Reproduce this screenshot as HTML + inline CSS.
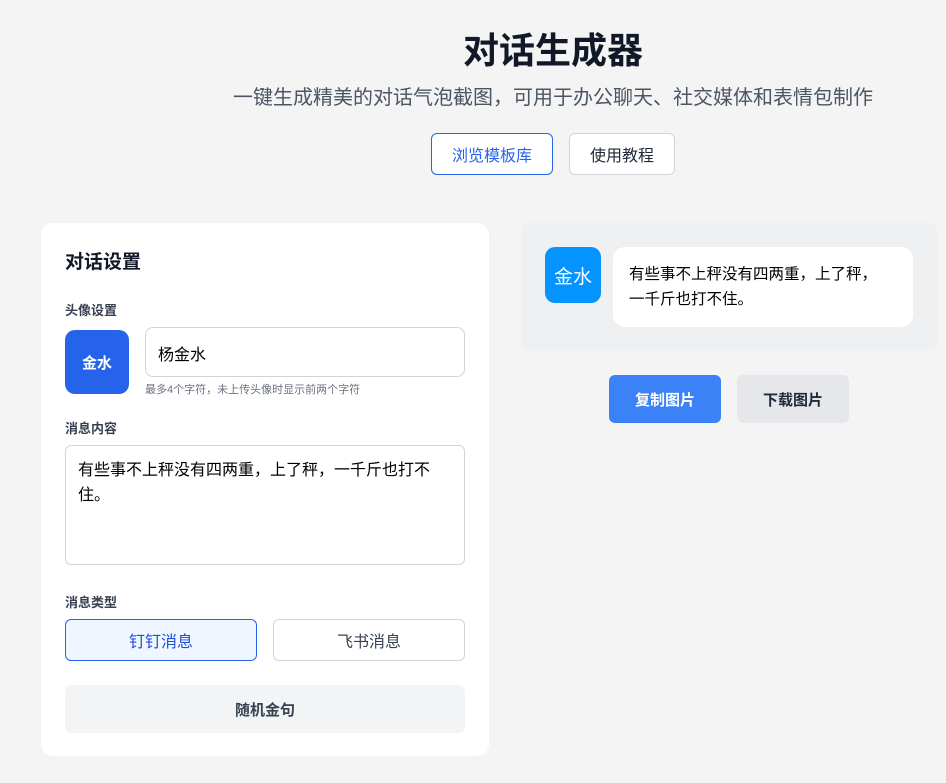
<!DOCTYPE html>
<html><head><meta charset="utf-8"><style>
*{box-sizing:border-box;margin:0;padding:0}
body{width:946px;height:783px;background:#f4f4f5;font-family:"Liberation Sans","Noto Sans CJK SC",sans-serif;position:relative;overflow:hidden;color:#1f2937}
.abs{position:absolute}
h1{position:absolute;left:0;width:1106px;top:22px;text-align:center;font-size:36px;font-weight:700;color:#111827}
.sub{left:0;width:1106px;top:81px;text-align:center;font-size:20px;color:#4b5563}
.btn{position:absolute;height:42px;border-radius:6px;border:1px solid #d1d5db;background:#fff;display:flex;align-items:center;justify-content:center;font-size:16px}
.card{left:41px;top:223px;width:448px;height:533px;background:#fff;border-radius:12px}
.lbl{font-size:13px;color:#374151;font-weight:700}
</style></head><body>
<h1>对话生成器</h1>
<div class="abs sub">一键生成精美的对话气泡截图，可用于办公聊天、社交媒体和表情包制作</div>
<div class="btn" style="left:431px;top:133px;width:122px;border-color:#2563eb;color:#2563eb">浏览模板库</div>
<div class="btn" style="left:569px;top:133px;width:106px;color:#1f2937">使用教程</div>

<div class="abs card">
<div class="abs" style="left:24px;top:24px;font-size:19px;font-weight:700;color:#111827">对话设置</div>
<div class="abs lbl" style="left:24px;top:77px">头像设置</div>
<div class="abs" style="left:24px;top:107px;width:64px;height:64px;border-radius:10px;background:#2563eb;color:#fff;display:flex;align-items:center;justify-content:center;font-size:15px;font-weight:700">金水</div>
<div class="abs" style="left:104px;top:104px;width:320px;height:50px;border:1px solid #d1d5db;border-radius:8px;font-size:16px;padding:13px 12px;color:#000">杨金水</div>
<div class="abs" style="left:104px;top:158px;font-size:11px;color:#6b7280">最多4个字符，未上传头像时显示前两个字符</div>
<div class="abs lbl" style="left:24px;top:195px">消息内容</div>
<div class="abs" style="left:24px;top:222px;width:400px;height:120px;border:1px solid #d1d5db;border-radius:6px;font-size:16px;line-height:25px;padding:12px 12px;color:#000">有些事不上秤没有四两重，上了秤，一千斤也打不住。</div>
<div class="abs lbl" style="left:24px;top:369px">消息类型</div>
<div class="btn" style="left:24px;top:396px;width:192px;background:#eff6ff;border-color:#2563eb;color:#1d4ed8">钉钉消息</div>
<div class="btn" style="left:232px;top:396px;width:192px;color:#374151">飞书消息</div>
<div class="abs" style="left:24px;top:462px;width:400px;height:48px;border-radius:6px;background:#f3f4f6;display:flex;align-items:center;justify-content:center;font-size:15px;font-weight:700;color:#374151">随机金句</div>
</div>

<div class="abs" style="left:521px;top:223px;width:416px;height:128px;background:#eff0f2;border-radius:8px">
<div class="abs" style="left:24px;top:24px;width:56px;height:56px;border-radius:10px;background:#0593ff;color:#fff;display:flex;align-items:center;justify-content:center;font-size:19px">金水</div>
<div class="abs" style="left:92px;top:24px;width:300px;height:80px;background:#fff;border-radius:12px;padding:15px 16px;font-size:15.5px;line-height:25px;color:#000">有些事不上秤没有四两重，上了秤，<br>一千斤也打不住。</div>
</div>
<div class="abs" style="left:609px;top:375px;width:112px;height:48px;border-radius:6px;background:#3b82f6;color:#fff;display:flex;align-items:center;justify-content:center;font-size:15px;font-weight:700">复制图片</div>
<div class="abs" style="left:737px;top:375px;width:112px;height:48px;border-radius:6px;background:#e5e7eb;color:#1f2937;display:flex;align-items:center;justify-content:center;font-size:15px;font-weight:700">下载图片</div>
</body></html>
